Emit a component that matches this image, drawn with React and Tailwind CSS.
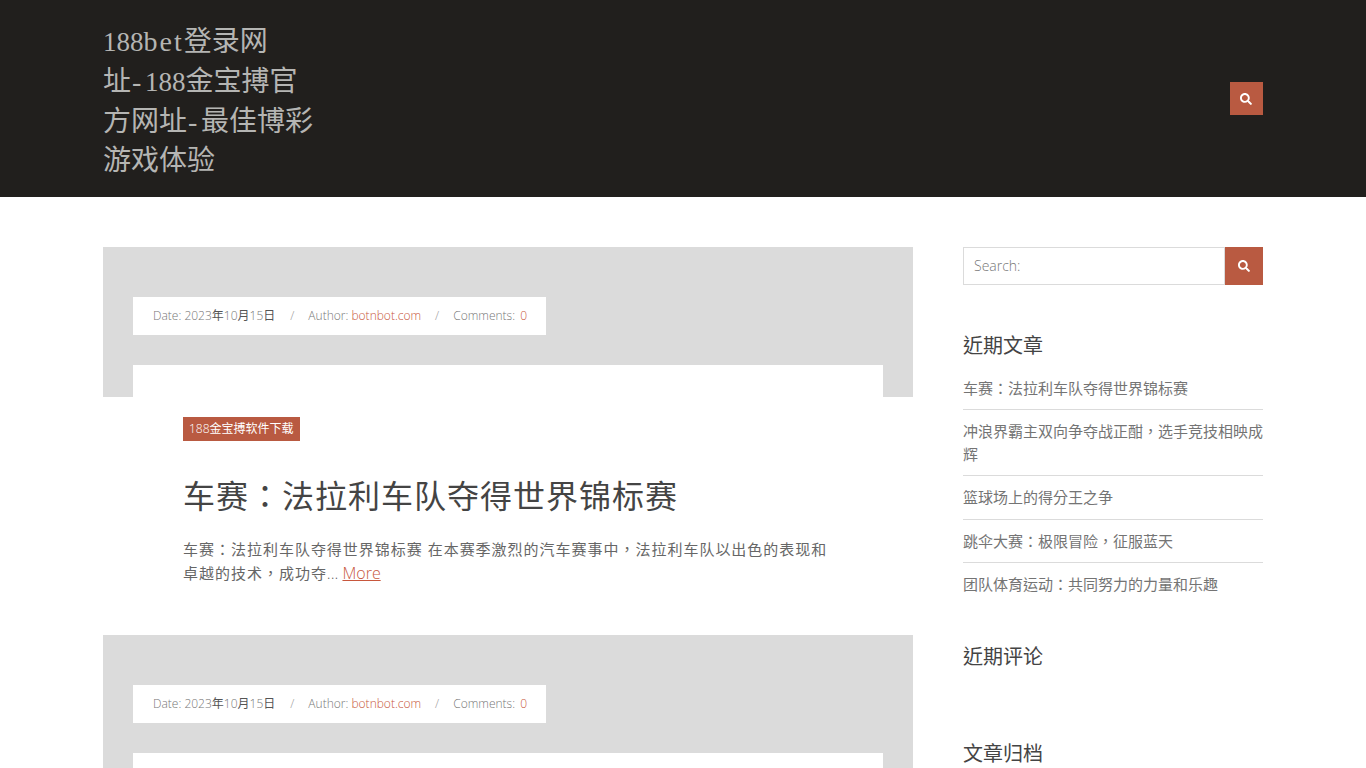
import React from "react";
import { FaSearch } from "react-icons/fa";

const cjk = '"Noto Sans CJK TC"';
const body = `"Open Sans", ${cjk}, sans-serif`;

function Meta() {
  return (
    <div className="h-[38px] w-[413px] bg-white flex items-center pl-5 text-[12px] font-light text-[#777] whitespace-nowrap">
      <span className="mr-[1px]">Date: 2023<span className="font-normal text-[#555]">年</span>10<span className="font-normal text-[#555]">月</span>15<span className="font-normal text-[#555]">日</span></span>
      <span className="mx-[14px] text-[#999]">/</span>
      <span>Author: <span className="text-[#c8573d]">botnbot.com</span></span>
      <span className="mx-[14px] text-[#999]">/</span>
      <span>Comments:&nbsp;&thinsp;<span className="text-[#c8573d]">0</span></span>
    </div>
  );
}

function Post({ full }) {
  return (
    <article className="w-[810px]">
      <div className="h-[150px] bg-[#dbdbdb] pt-[50px] px-[30px] flex flex-col">
        <Meta />
        <div className="mt-[30px] flex-1 bg-white" />
      </div>
      {full && (
        <div className="px-[80px] pt-5 h-[238px]">
          <span className="inline-block h-6 leading-6 bg-[#b95a41] px-[6px] text-[12px] font-light text-white align-top">188<span className="font-normal">金宝搏软件下载</span></span>
          <h2 className="mt-[33px] text-[32px] leading-[44px] tracking-[1px] font-normal text-[#444]">车赛：法拉利车队夺得世界锦标赛</h2>
          <p className="mt-[19px] text-[16px] leading-6 font-light text-[#666]">
            <span className="font-normal text-[14.99px] tracking-[1px]">车赛：法拉利车队夺得世界锦标赛 在本赛季激烈的汽车赛事中，法拉利车队以出色的表现和卓越的技术，成功夺</span>... <a className="text-[#c8573d] underline">More</a>
          </p>
        </div>
      )}
    </article>
  );
}

const links = [
  "车赛：法拉利车队夺得世界锦标赛",
  "冲浪界霸主双向争夺战正酣，选手竞技相映成辉",
  "篮球场上的得分王之争",
  "跳伞大赛：极限冒险，征服蓝天",
  "团队体育运动：共同努力的力量和乐趣",
];

export default function App() {
  return (
    <div className="h-screen overflow-hidden bg-white" style={{ fontFamily: body }}>
      <header className="h-[197px] bg-[#211f1d] px-[103px] flex items-center justify-between">
        <h1
          className="w-[215px] pt-[5px] text-[28px] leading-[39.2px] font-normal text-[#b5b5b3]"
          style={{ fontFamily: `"Liberation Serif", "Noto Sans CJK SC", serif` }}
        >
          <span className="text-[27px]">188</span><span className="tracking-[2px]">bet</span>登录网址<span className="ml-[1px] tracking-[3.7px]">-</span><span className="text-[27px]">188</span>金宝搏官方网址<span className="ml-[1px] tracking-[3.7px]">-</span>最佳博彩游戏体验
        </h1>
        <button className="w-[33px] h-[33px] bg-[#b95a41] flex items-center justify-center pr-[1px]">
          <FaSearch size={12} color="#fff" />
        </button>
      </header>
      <main className="px-[103px] pt-[50px] flex gap-[50px] items-start">
        <div className="w-[810px] shrink-0">
          <Post full />
          <Post />
        </div>
        <aside className="w-[300px]">
          <div className="flex h-[38px]">
            <div className="flex-1 border border-[#dbdbdb] flex items-center pl-[10px] pb-[2px] text-[14px] font-light text-[#777]">Search:</div>
            <button className="w-[38px] bg-[#b95a41] flex items-center justify-center pb-[1px]"><FaSearch size={12} color="#fff" /></button>
          </div>
          <h3 className="mt-[45px] text-[20px] leading-[32px] font-normal text-[#444]">近期文章</h3>
          <ul className="mt-[14.5px]">
            {links.map((t, i) => (
              <li key={t} className={`text-[15px] leading-[22.5px] text-[#747474] font-normal pb-[10px] mb-[10px] ${i < 4 ? "border-b border-[#dbdbdb]" : ""}`}>
                {t}
              </li>
            ))}
          </ul>
          <h3 className="mt-[35px] text-[20px] leading-[32px] font-normal text-[#444]">近期评论</h3>
          <h3 className="mt-[65px] text-[20px] leading-[32px] font-normal text-[#444]">文章归档</h3>
        </aside>
      </main>
    </div>
  );
}
